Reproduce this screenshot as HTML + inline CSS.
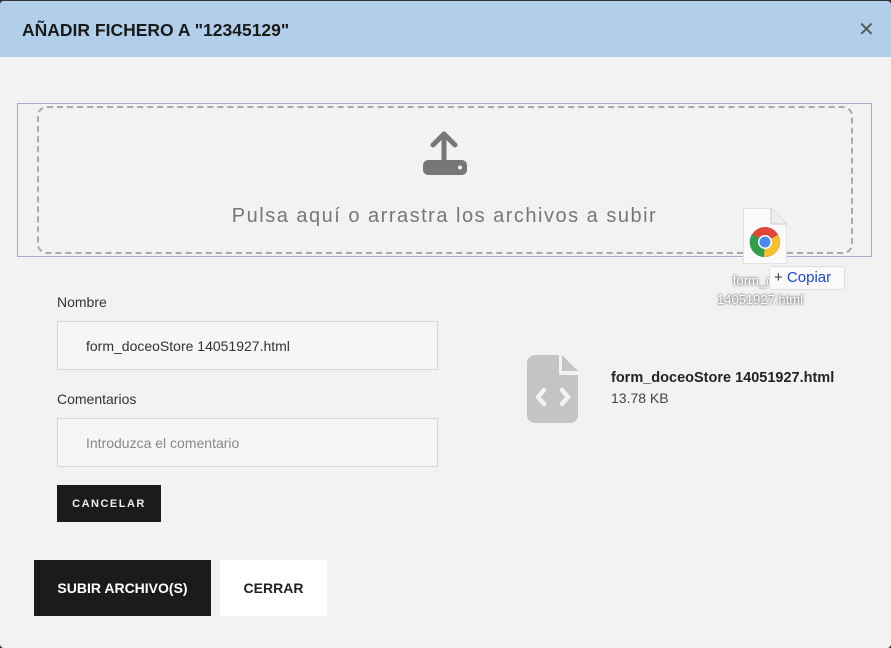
<!DOCTYPE html>
<html><head><style>
body{margin:0;width:891px;height:648px;background:#333;font-family:"Liberation Sans","DejaVu Sans",sans-serif;overflow:hidden;position:relative}
.m{position:absolute;left:0;top:1px;width:891px;height:647px;background:#f2f2f2;border-radius:4px;overflow:hidden}
.h{position:absolute;left:0;top:0;width:891px;height:56px;background:#b1cfea}
.h span{position:absolute;left:22px;top:19px;font-size:17.5px;font-weight:bold;color:#1a1a1a}
.x{position:absolute;left:858px;top:16px;font-size:20px;color:#555;font-weight:bold}
.dz{position:absolute;left:17px;top:102px;width:855px;height:154px;border:1px solid #aaa8cc;box-sizing:border-box}
.dz .in{position:absolute;left:19px;top:2px;width:816px;height:148px;border:2px dashed #aaa;border-radius:10px;box-sizing:border-box}
.dz .t{position:absolute;left:0;width:100%;top:101px;text-align:center;font-size:20px;color:#777;letter-spacing:1.5px}
.lbl{position:absolute;left:57px;font-size:14px;color:#333}
.inp{position:absolute;left:57px;width:381px;height:49px;background:#f6f6f8;border:1px solid #d6d6d6;box-sizing:border-box;font-size:14px;padding:16px 0 0 28px}
.b{position:absolute;display:flex;align-items:center;justify-content:center;font-weight:bold}
</style></head><body>
<div class="m">
<div class="h"><span>AÑADIR FICHERO A "12345129"</span><div class="x">✕</div></div>
<div class="dz"><div class="in"></div>
<svg style="position:absolute;left:403px;top:25px" width="46" height="46" viewBox="0 0 46 46"><path d="M23 30V6M12 16L23 5l11 11" stroke="#777" stroke-width="5" fill="none" stroke-linecap="round" stroke-linejoin="round"/><rect x="2" y="31" width="44" height="15" rx="5" fill="#777"/><rect x="21" y="31" width="4" height="5" fill="#777"/><circle cx="39" cy="38.5" r="2" fill="#eee"/></svg>
<div class="t">Pulsa aquí o arrastra los archivos a subir</div></div>
<div class="lbl" style="top:293px">Nombre</div>
<div class="inp" style="top:320px;color:#333">form_doceoStore 14051927.html</div>
<div class="lbl" style="top:390px">Comentarios</div>
<div class="inp" style="top:417px;color:#888">Introduzca el comentario</div>
<div class="b" style="left:57px;top:484px;width:104px;height:37px;background:#1b1b1b;color:#eee;font-size:11px;letter-spacing:1.5px">CANCELAR</div>
<div class="b" style="left:34px;top:559px;width:177px;height:56px;background:#1b1b1b;color:#fff;font-size:14px">SUBIR ARCHIVO(S)</div>
<div class="b" style="left:220px;top:559px;width:107px;height:56px;background:#fff;color:#222;font-size:14px">CERRAR</div>
<svg style="position:absolute;left:527px;top:354px" width="52" height="68" viewBox="0 0 52 68"><path d="M8 0H32V20H51V60a8 8 0 0 1-8 8H8a8 8 0 0 1-8-8V8a8 8 0 0 1 8-8z" fill="#c4c4c4"/><path d="M35 0L51 16H35z" fill="#c4c4c4"/><path d="M17 35l-6 7 6 7M35 35l6 7-6 7" stroke="#f2f2f2" stroke-width="4.5" fill="none" stroke-linecap="round" stroke-linejoin="round"/></svg>
<div style="position:absolute;left:611px;top:369px;font-size:14.5px;font-weight:bold;color:#222">form_doceoStore 14051927.html</div>
<div style="position:absolute;left:611px;top:389px;font-size:14px;color:#444">13.78 KB</div>
<svg style="position:absolute;left:743px;top:207px" width="44" height="56" viewBox="0 0 44 56"><path d="M0 0H28L44 16V56H0z" fill="#fafafa" stroke="#ccc"/><path d="M28 0V16H44" fill="#eee" stroke="#ccc"/><circle cx="22" cy="34" r="15" fill="#e0463a"/><path d="M22 34L9 26A15 15 0 0 0 21 49z" fill="#2f9e4a"/><path d="M22 34L35 27A15 15 0 0 1 21 49z" fill="#f5c22e"/><circle cx="22" cy="34" r="7" fill="#fff"/><circle cx="22" cy="34" r="5.5" fill="#4a89f0"/></svg>
<div style="position:absolute;left:705px;top:270px;font-size:13px;color:#fff;text-shadow:0 0 2px #666,0 0 3px #888;text-align:center;width:110px;line-height:19px">form_doc<br>14051927.html</div>
<div style="position:absolute;left:769px;top:265px;width:76px;height:24px;background:#fafafa;border:1px solid #ddd;border-radius:3px;font-size:15px;color:#1a47d8;line-height:22px;box-sizing:border-box;padding-left:4px"><span style="color:#333">+</span> Copiar</div>
</div>
</body></html>
